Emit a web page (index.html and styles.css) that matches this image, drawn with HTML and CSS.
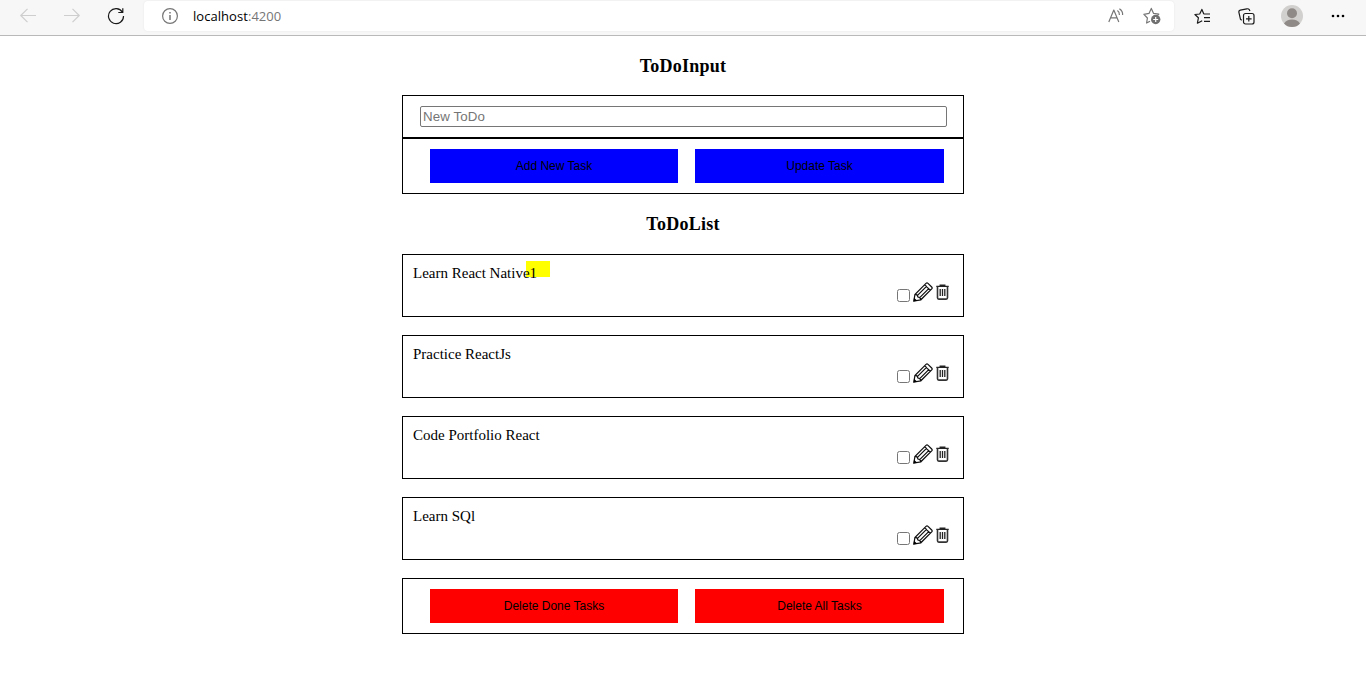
FILE: index.html
```html
<!DOCTYPE html>
<html lang="en">
<head>
<meta charset="utf-8">
<title>ToDo</title>
<link rel="stylesheet" href="styles.css">
</head>
<body>
<svg class="defs" aria-hidden="true">
  <symbol id="pencil" viewBox="0 0 20 20">
    <path d="M.9 19 1.9 12.5 13 1.4Q14 .5 15 1.4L18.7 5Q19.6 5.9 18.7 6.9L7.8 17.8Z M1.9 12.5Q4.6 12.4 4.9 15 7.6 15.2 7.8 17.8 M4.5 13.4 14 3.9 M6.7 15.6 16.2 6.1 M11.7 2.9 17.2 8.4" fill="none" stroke="#111" stroke-width="1.25"/>
    <path d="M.4 19.6 1 15.8 4.3 18.8Z"/>
  </symbol>
  <symbol id="trash" viewBox="0 0 13 16">
    <path d="M.3 2.4H12.7M4.2 2V1.1H8.8V2" fill="none" stroke="#222" stroke-width="1.3"/>
    <path d="M1.5 2.5V13.8Q1.5 15.1 2.8 15.1H10.2Q11.5 15.1 11.5 13.8V2.5" fill="none" stroke="#333" stroke-width="1.6"/>
    <path d="M4.2 5V12M6.5 5V12M8.8 5V12" fill="none" stroke="#222" stroke-width="1.3"/>
  </symbol>
</svg>
<header class="browser-bar">
  <nav class="nav-icons">
    <svg width="16" height="16" viewBox="0 0 16 16" class="line faint"><path d="M16 7.5H.8M7.5.8.8 7.5l6.7 6.7"/></svg>
    <svg width="16" height="16" viewBox="0 0 16 16" class="line faint"><path d="M0 7.5h15.2M8.5.8l6.7 6.7-6.7 6.7"/></svg>
    <svg width="18" height="18" viewBox="0 0 18 18" class="line dark"><path d="M15.4 5.2A7.5 7.5 0 1 0 16.5 9M15.8 1.2v4.3h-4.5"/></svg>
  </nav>
  <div class="address">
    <svg width="16" height="16" viewBox="0 0 16 16" class="line info"><circle cx="8" cy="8" r="7.4"/><path d="M8 7v5M8 4v1.6" stroke-width="1.5"/></svg>
    <span class="url">localhost<span class="port">:4200</span></span>
    <svg width="17" height="16" viewBox="0 0 17 16" class="line grey read"><path d="M.8 14 5.8 2l5 12M2.6 9.8h6.4M9.4 2.6q2.2 1.5 2 4.4M11.4.7q3.6 2.3 3.2 6.3"/></svg>
    <svg width="18" height="18" viewBox="0 0 18 18" class="line grey"><path d="M7 14.2 3.6 16 4.4 11 .9 7.3 6 6.4 8.3 1.4 10.6 6.4 15.8 7.2 14.5 8.6"/><circle cx="12.7" cy="12.5" r="4.7" class="badge"/><path d="M12.7 10v5M10.2 12.5h5" class="plus"/></svg>
  </div>
  <div class="tools">
    <svg width="18" height="17" viewBox="0 0 18 17" class="line dark fav"><path d="M9.8 6 7.9 1.4 5.7 6 .9 6.5 4.4 9.8 3.4 15.2 8.2 12.7M9.8 6H16M10 9.7H16M10 13.4H16"/></svg>
    <svg width="17" height="17" viewBox="0 0 17 17" class="line dark coll"><rect x="5.5" y="5.5" width="10.5" height="10.5" rx="2"/><path d="M10.8 8v5.6M8 10.8h5.6M3.7 12.2 2.5 11.3.9 4.3Q.5 2.6 2.3 2.1L8.8.8Q10.5.5 11.3 1.7L12 3"/></svg>
    <svg width="22" height="22" viewBox="0 0 22 22" class="avatar"><circle cx="11" cy="11" r="11" fill="#d2d0ce"/><circle cx="11" cy="8.2" r="5" fill="#8f8a87"/><path d="M3 18.5Q5.5 14.5 11 14.5T19 18.5Q16 22 11 22T3 18.5Z" fill="#8f8a87"/></svg>
    <svg width="14" height="4" viewBox="0 0 14 4"><circle cx="2" cy="2" r="1.3"/><circle cx="7" cy="2" r="1.3"/><circle cx="12" cy="2" r="1.3"/></svg>
  </div>
</header>
<main class="todo">
  <h3 class="title">ToDoInput</h3>
  <div class="box entry"><input class="field" type="text" placeholder="New ToDo"></div>
  <div class="box actions">
    <button class="btn add">Add New Task</button>
    <button class="btn add">Update Task</button>
  </div>
  <h3 class="title list-title">ToDoList</h3>
  <section class="list">
    <article class="box task">
      <span class="name marked">Learn React Native1</span>
      <div class="controls"><input class="check" type="checkbox"><svg class="pencil"><use href="#pencil"/></svg><svg class="trash"><use href="#trash"/></svg></div>
    </article>
    <article class="box task">
      <span class="name">Practice ReactJs</span>
      <div class="controls"><input class="check" type="checkbox"><svg class="pencil"><use href="#pencil"/></svg><svg class="trash"><use href="#trash"/></svg></div>
    </article>
    <article class="box task">
      <span class="name">Code Portfolio React</span>
      <div class="controls"><input class="check" type="checkbox"><svg class="pencil"><use href="#pencil"/></svg><svg class="trash"><use href="#trash"/></svg></div>
    </article>
    <article class="box task">
      <span class="name">Learn SQl</span>
      <div class="controls"><input class="check" type="checkbox"><svg class="pencil"><use href="#pencil"/></svg><svg class="trash"><use href="#trash"/></svg></div>
    </article>
    <div class="box actions">
      <button class="btn delete">Delete Done Tasks</button>
      <button class="btn delete">Delete All Tasks</button>
    </div>
  </section>
</main>
</body>
</html>
```

FILE: styles.css
```css
* { box-sizing: border-box; }
body { margin: 0; background: #fff; color: #000; font-family: "Liberation Serif", serif; overflow: hidden; }
.defs { position: absolute; width: 0; height: 0; }

.browser-bar { display: flex; height: 36px; background: #f7f7f7; border-bottom: 1px solid #b9b9b9; padding-top: 1px; }
.nav-icons { display: flex; width: 144px; height: 30px; align-items: center; padding-left: 20px; gap: 28px; }
.nav-icons .dark { margin-left: -1px; }
.address { display: flex; width: 1030px; height: 30px; align-items: center; background: #fff; border-radius: 4px; padding: 0 13px 0 18px; box-shadow: 0 0 2px #e4e4e4; }
.url { font: 13px/18px "Open Sans", "Noto Sans", sans-serif; margin-left: 15px; letter-spacing: 0.05px; }
.port { color: #767676; }
.read { margin-left: auto; margin-right: 18px; }
.tools { display: flex; flex: 1; height: 30px; align-items: center; padding-left: 20px; }
.coll { margin-left: 26px; }
.avatar { margin-left: 26px; margin-right: 28px; }
.line { fill: none; stroke-width: 1.2; stroke-linejoin: round; }
.faint { stroke: #cecece; }
.dark { stroke: #1a1a1a; }
.grey, .info { stroke: #767676; }
.badge { fill: #707070; stroke: none; }
.plus { stroke: #fff; }

.todo { width: 562px; margin: 0 auto; padding-top: 19px; }
.title { margin: 0; height: 40px; font-size: 18px; letter-spacing: 0.25px; line-height: 22px; text-align: center; }
.list-title { height: 41px; margin-top: 19px; }
.box { border: 1px solid #000; }
.entry { height: 43px; padding: 10px 16px 0 17px; }
.field { display: block; width: 527px; height: 21px; padding: 1px 2px; border: 1px solid #767676; border-radius: 2px; font: 13.33px "Liberation Sans", Arial, sans-serif; letter-spacing: 0.08px; }
.field::placeholder { color: #757575; }
.actions { display: grid; grid-template-columns: 248px 249px; gap: 17px; height: 56px; padding: 10px 0 0 27px; }
.btn { height: 34px; padding: 0; border: 0; font: 12px "Liberation Sans", Arial, sans-serif; color: #000; }
.add { background: #00f; }
.delete { background: #f00; }
.list { display: flex; flex-direction: column; gap: 18px; }
.task { height: 63px; padding: 9px 14px 0 10px; }
.name { display: block; width: max-content; height: 19px; font-size: 15px; line-height: 19px; white-space: nowrap; }
.marked { width: 137px; background: linear-gradient(#ff0, #ff0) 113px 0 / 24px 16px no-repeat; }
.marked { margin-top: -3px; padding-top: 3px; height: 22px; }
.controls { display: flex; justify-content: flex-end; }
.check { width: 13px; height: 13px; margin: 6px 3px 0 0; }
.pencil { width: 20px; height: 20px; margin-top: -1px; }
.trash { width: 13px; height: 16px; margin: 1px 0 0 3px; }
```
